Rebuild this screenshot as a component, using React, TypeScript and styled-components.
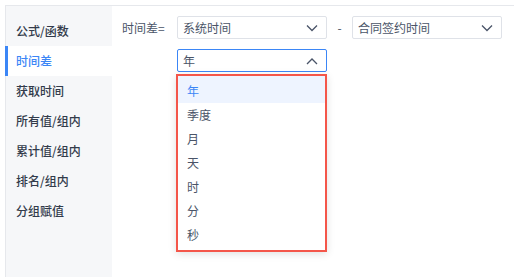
import React from 'react';
import styled, { createGlobalStyle } from 'styled-components';

const GlobalStyle = createGlobalStyle`
  html, body { margin: 0; padding: 0; background: #fff; }
  body { font-family: "Noto Sans CJK SC", "Noto Sans", sans-serif; }
`;

const menu = ['公式/函数', '时间差', '获取时间', '所有值/组内', '累计值/组内', '排名/组内', '分组赋值'];
const units = ['年', '季度', '月', '天', '时', '分', '秒'];

function Chevron({ up }: { up?: boolean }) {
  return (
    <svg width="12" height="8" viewBox="0 0 12 8">
      <path d={up ? 'M1 7 L6 2 L11 7' : 'M1 1.5 L6 6.5 L11 1.5'} fill="none" stroke="#4a5468" strokeWidth="1.3" />
    </svg>
  );
}

export default function App() {
  return (
    <>
      <GlobalStyle />
      <Frame>
        <Sidebar>
          {menu.map((m) => (
            <MenuItem key={m} active={m === '时间差'}>{m}</MenuItem>
          ))}
        </Sidebar>
        <Main>
          <Row>
            <Label>时间差=</Label>
            <Select>
              <span>系统时间</span>
              <Chevron />
            </Select>
            <Dash>-</Dash>
            <Select>
              <span>合同签约时间</span>
              <Chevron />
            </Select>
          </Row>
          <Row>
            <LabelSpacer />
            <Picker>
              <Select open>
                <span>年</span>
                <Chevron up />
              </Select>
              <Dropdown>
                {units.map((u, i) => (
                  <Option key={u} selected={i === 0}>{u}</Option>
                ))}
              </Dropdown>
            </Picker>
          </Row>
        </Main>
      </Frame>
    </>
  );
}

const Frame = styled.div`
  margin: 5px 0 0 5px;
  height: 272px;
  border-top: 1px solid #e6e8ec;
  border-left: 1px solid #e6e8ec;
  display: flex;
  box-sizing: border-box;
`;

const Sidebar = styled.div`
  width: 106px;
  background: #f6f7f9;
  padding-top: 10px;
  display: flex;
  flex-direction: column;
`;

const MenuItem = styled.div<{ active?: boolean }>`
  height: 30px;
  line-height: 30px;
  padding-left: 8px;
  font-size: 12px;
  font-weight: 500;
  color: ${(p) => (p.active ? '#3b86f6' : '#323b4b')};
  background: ${(p) => (p.active ? '#fff' : 'transparent')};
  border-left: 3px solid ${(p) => (p.active ? '#3b86f6' : 'transparent')};
  margin-left: -1px;
`;

const Main = styled.div`
  flex: 1;
  padding: 10px 0 0 10px;
  display: flex;
  flex-direction: column;
  gap: 10px;
`;

const Row = styled.div`
  display: flex;
  align-items: flex-start;
`;

const Label = styled.div`
  width: 55px;
  height: 23px;
  line-height: 23px;
  font-size: 12px;
  color: #4a5468;
`;

const LabelSpacer = styled.div`
  width: 55px;
`;

const Dash = styled.div`
  width: 25px;
  text-align: center;
  height: 23px;
  line-height: 23px;
  font-size: 12px;
  color: #4a5468;
`;

const Select = styled.div<{ open?: boolean }>`
  width: 150px;
  height: 23px;
  box-sizing: border-box;
  border: 1px solid ${(p) => (p.open ? '#3b86f6' : '#dfe2e8')};
  border-radius: 2px;
  display: flex;
  align-items: center;
  justify-content: space-between;
  padding: 0 8px 0 5px;
  font-size: 12px;
  color: #4a5468;
  background: #fff;
`;

const Picker = styled.div`
  position: relative;
`;

const Dropdown = styled.div`
  position: absolute;
  left: -1px;
  top: 25px;
  width: 151px;
  box-sizing: border-box;
  border: 2px solid #f4564a;
  padding-bottom: 3px;
  background: #fff;
  box-shadow: 0 2px 8px rgba(0, 0, 0, 0.12);
`;

const Option = styled.div<{ selected?: boolean }>`
  height: 24px;
  line-height: 24px;
  padding-left: 9px;
  font-size: 12px;
  color: ${(p) => (p.selected ? '#3b86f6' : '#4a5468')};
  background: ${(p) => (p.selected ? '#eef4ff' : 'transparent')};

  &:first-child {
    padding-top: 3px;
  }
`;
